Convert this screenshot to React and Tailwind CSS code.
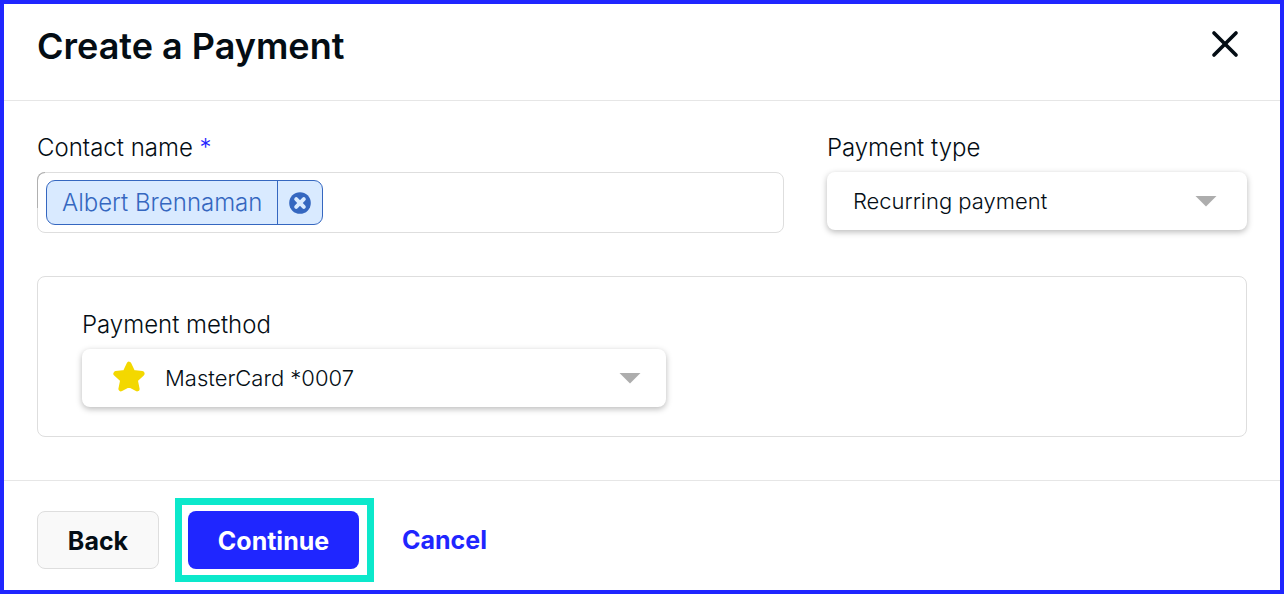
import React from 'react';
import { X } from 'lucide-react';

const paymentTypes = ['Recurring payment', 'One-time payment'];
const paymentMethods = ['MasterCard *0007', 'Visa *1111'];

function Caret({ className }) {
  return (
    <svg
      viewBox="0 0 22 11"
      className={`pointer-events-none absolute top-6 h-[11px] w-[22px] text-[#adadad] ${className}`}
      fill="currentColor"
      aria-hidden="true"
    >
      <path d="M0.5 0h21L11 10.5z" />
    </svg>
  );
}

function StarIcon() {
  return (
    <svg
      viewBox="0 0 34 32"
      className="pointer-events-none absolute left-[30px] top-3 h-8 w-[34px] text-[#f3d800]"
      fill="currentColor"
      stroke="currentColor"
      strokeWidth="5"
      strokeLinejoin="round"
      aria-hidden="true"
    >
      <path d="M17 3.2l3.9 8.3 9.2 1.1-6.8 6.3 1.8 9-8.1-4.4-8.1 4.4 1.8-9-6.8-6.3 9.2-1.1z" />
    </svg>
  );
}

function SelectField({ id, label, options, icon, className = '' }) {
  return (
    <div className={className}>
      <label htmlFor={id} className="mb-2 block text-2xl leading-8">
        {label}
      </label>
      <div className="relative">
        <select
          id={id}
          className={`block h-[58px] w-full appearance-none rounded-lg bg-white pr-16 text-[22px] shadow-[0_2px_6px_rgba(0,0,0,0.28)] ${
            icon ? 'pl-[83px]' : 'pl-[26px]'
          }`}
        >
          {options.map((option) => (
            <option key={option}>{option}</option>
          ))}
        </select>
        {icon}
        <Caret className={icon ? 'right-[25px]' : 'right-[30px]'} />
      </div>
    </div>
  );
}

function ContactField() {
  return (
    <div>
      <label htmlFor="contact" className="mb-2 block text-2xl leading-8">
        Contact name <span className="text-[#1f26ff]">*</span>
      </label>
      <div className="relative flex h-[61px] items-center rounded-lg border border-[#dedede] px-2">
        {/* Darker edge on the upper left */}
        <span className="absolute -left-px -top-px h-9 w-2 rounded-tl-lg border-l border-t border-[#b0b0b0]" />
        <div className="flex h-[45px] shrink-0 rounded-[9px] border border-[#3567c0] bg-[#d9eaff] text-[#3567c0]">
          <span className="flex items-center px-[15px] text-2xl">Albert Brennaman</span>
          <button
            type="button"
            aria-label="Remove Albert Brennaman"
            className="flex w-[45px] items-center justify-center border-l border-[#3567c0]"
          >
            <svg viewBox="0 0 22 22" className="h-[22px] w-[22px]" aria-hidden="true">
              <circle cx="11" cy="11" r="10.8" fill="currentColor" />
              <path d="M7.2 7.2l7.6 7.6M14.8 7.2l-7.6 7.6" stroke="#d9eaff" strokeWidth="4" strokeLinecap="round" />
            </svg>
          </button>
        </div>
        <input id="contact" type="text" className="h-full min-w-0 flex-1 bg-transparent px-3 text-2xl outline-none" />
      </div>
    </div>
  );
}

export default function App() {
  return (
    <form className="flex min-h-screen flex-col border-4 border-[#1f26ff] bg-white font-['Inter',sans-serif] font-[350] text-[#040d14]">
      <header className="flex h-[97px] items-start justify-between border-b border-[#e6e6e6] px-[33px] pt-[18px]">
        <h1 className="text-4xl leading-[48px] font-semibold">Create a Payment</h1>
        <button type="button" aria-label="Close">
          <X className="h-11 w-11" strokeWidth={2} />
        </button>
      </header>

      <main className="flex flex-1 flex-col gap-[43px] px-[33px] pb-[43px] pt-[31px]">
        <div className="grid grid-cols-[16fr_9fr] gap-[43px]">
          <ContactField />
          <SelectField id="payment-type" label="Payment type" options={paymentTypes} />
        </div>
        <section className="rounded-lg border border-[#dedede] px-11 pb-[29px] pt-8">
          <SelectField
            id="payment-method"
            label="Payment method"
            options={paymentMethods}
            icon={<StarIcon />}
            className="max-w-[584px]"
          />
        </section>
      </main>

      <footer className="flex items-center border-t border-[#e6e6e6] px-[33px] pb-[21px] pt-[30px] text-[25px] font-bold">
        <button type="button" className="h-[58px] w-[122px] rounded-lg border border-[#dedede] bg-[#f9f9f9] pt-1">
          Back
        </button>
        <div className="relative ml-[29px]">
          <button type="submit" className="h-[58px] w-[171px] rounded-lg bg-[#1f26ff] pt-1 text-white">
            Continue
          </button>
          {/* Highlight */}
          <span className="pointer-events-none absolute -inset-y-[13px] -left-[13px] -right-[15px] border-[7px] border-[#0ce8cb]" />
        </div>
        <button type="button" className="ml-[43px] pt-0.5 text-[#1f26ff]">
          Cancel
        </button>
      </footer>
    </form>
  );
}
